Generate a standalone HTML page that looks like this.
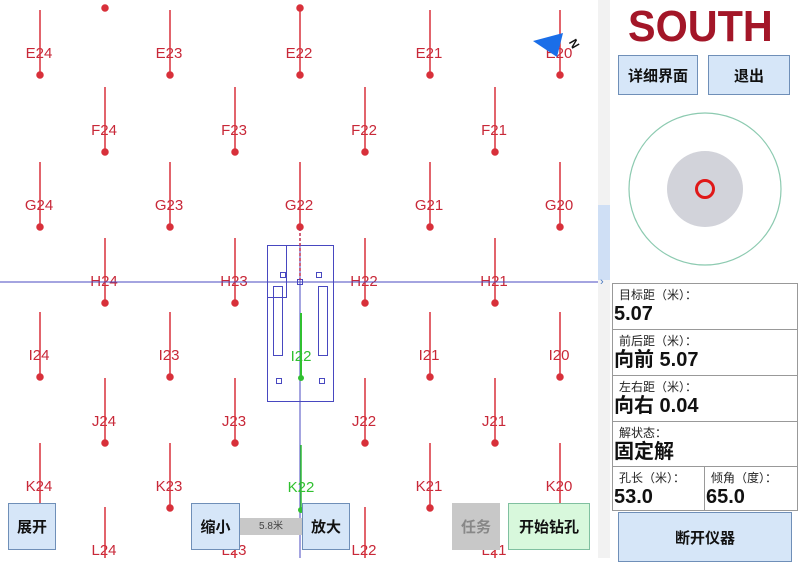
<!DOCTYPE html>
<html><head><meta charset="utf-8"><style>
*{margin:0;padding:0;box-sizing:border-box}
body{width:800px;height:558px;overflow:hidden;background:#fff;font-family:"Liberation Sans","Noto Sans CJK SC",sans-serif;position:relative}
.btn{position:absolute;display:flex;align-items:center;justify-content:center;font-weight:bold;font-size:15px;color:#111;background:#d6e6f8;border:1px solid #6f8fb8}
.cell{position:absolute;border:1px solid #999;background:#fff}
.cell .l{font-size:12px;color:#222;padding-left:6px;line-height:16px;margin-top:3px}
.cell .v{font-size:20px;font-weight:bold;color:#111;line-height:22px;padding-left:1px}
</style></head><body>
<svg width="600" height="558" style="position:absolute;left:0;top:0" font-family="Liberation Sans, sans-serif" font-size="15">
<g id="grid" stroke="#d8303a" stroke-width="1.5" fill="#d8303a"></g>
<line x1="0" y1="282" x2="600" y2="282" stroke="#4848c0" stroke-width="1"/>
<line x1="300" y1="245" x2="300" y2="558" stroke="#4848c0" stroke-width="1"/>
<g fill="none" stroke="#4848c0" stroke-width="1">
<rect x="267.5" y="245.5" width="66" height="156"/>
<rect x="267.5" y="245.5" width="19" height="52"/>
<rect x="273.5" y="286.5" width="9" height="69"/>
<rect x="318.5" y="286.5" width="9" height="69"/>
<rect x="280.5" y="272.5" width="5" height="5"/>
<rect x="316.5" y="272.5" width="5" height="5"/>
<rect x="297.5" y="279.5" width="5" height="5"/>
<rect x="276.5" y="378.5" width="5" height="5"/>
<rect x="319.5" y="378.5" width="5" height="5"/>
</g>
<line x1="300" y1="228" x2="300" y2="280" stroke="#c03050" stroke-width="1.5" stroke-dasharray="3,2"/>
<text x="301" y="361" fill="#30c030" text-anchor="middle">I22</text>
<line x1="301" y1="313" x2="301" y2="378" stroke="#30c030" stroke-width="2"/>
<circle cx="301" cy="378" r="3" fill="#30c030"/>
<text x="301" y="492" fill="#30c030" text-anchor="middle">K22</text>
<line x1="301" y1="445" x2="301" y2="510" stroke="#30c030" stroke-width="1.5"/>
<circle cx="301" cy="510" r="3" fill="#30c030"/>
<polygon points="533,41 563,33 557,57" fill="#1a6ee8"/>
<text x="572" y="44" font-size="12" font-weight="bold" transform="rotate(60 572 40)" fill="#111">N</text>
</svg>
<div style="position:absolute;left:598px;top:0;width:12px;height:558px;background:#f2f2f2"></div>
<div style="position:absolute;left:598px;top:205px;width:12px;height:75px;background:#cfdff5"></div>
<div style="position:absolute;left:600px;top:276px;font-size:11px;color:#4a7ac0">›</div>

<div class="btn" style="left:8px;top:503px;width:48px;height:47px">展开</div>
<div class="btn" style="left:191px;top:503px;width:49px;height:47px">缩小</div>
<div style="position:absolute;left:240px;top:518px;width:62px;height:17px;background:#c8c8c8;font-size:10px;color:#444;text-align:center;line-height:17px">5.8米</div>
<div class="btn" style="left:302px;top:503px;width:48px;height:47px">放大</div>
<div class="btn" style="left:452px;top:503px;width:48px;height:47px;background:#c8c8c8;border-color:#c8c8c8;color:#888">任务</div>
<div class="btn" style="left:508px;top:503px;width:82px;height:47px;background:#d8f8dc;border-color:#80c0a0">开始钻孔</div>

<div style="position:absolute;left:628px;top:5px;font-size:44px;line-height:44px;font-weight:bold;color:#a31628;transform:scaleX(0.94);transform-origin:left top;font-family:'Liberation Sans',sans-serif;white-space:nowrap">SOUTH</div>
<div class="btn" style="left:618px;top:55px;width:80px;height:40px">详细界面</div>
<div class="btn" style="left:708px;top:55px;width:82px;height:40px">退出</div>
<svg width="200" height="180" style="position:absolute;left:610px;top:100px">
<circle cx="95" cy="89" r="76" fill="none" stroke="#8ccab0" stroke-width="1.2"/>
<circle cx="95" cy="89" r="38" fill="#d2d3da"/>
<circle cx="95" cy="89" r="8.5" fill="none" stroke="#e01818" stroke-width="3"/>
</svg>
<div class="cell" style="left:612px;top:283px;width:186px;height:47px"><div class="l">目标距（米）：</div><div class="v">5.07</div></div>
<div class="cell" style="left:612px;top:329px;width:186px;height:47px"><div class="l">前后距（米）：</div><div class="v">向前 5.07</div></div>
<div class="cell" style="left:612px;top:375px;width:186px;height:47px"><div class="l">左右距（米）：</div><div class="v">向右 0.04</div></div>
<div class="cell" style="left:612px;top:421px;width:186px;height:46px"><div class="l">解状态：</div><div class="v">固定解</div></div>
<div class="cell" style="left:612px;top:466px;width:93px;height:45px"><div class="l">孔长（米）：</div><div class="v">53.0</div></div>
<div class="cell" style="left:704px;top:466px;width:94px;height:45px"><div class="l">倾角（度）：</div><div class="v">65.0</div></div>
<div class="btn" style="left:618px;top:512px;width:174px;height:50px">断开仪器</div>
<script>
var g=document.getElementById('grid'),s='';
var rows=[['E',53,0],['F',130,1],['G',205,0],['H',281,1],['I',355,0],['J',421,1],['K',486,0],['L',550,1]];
var ev=[40,170,300,430,560],od=[105,235,365,495];
rows.forEach(function(r){var xs=r[2]?od:ev;xs.forEach(function(x,i){
var n=24-i;var lab=r[0]+n;
if((r[0]=='I'||r[0]=='K')&&x==300)return;
var t=r[1]-43,b=r[1]+22;
s+='<text x="'+(x-1)+'" y="'+(r[1]+5)+'" stroke="none" fill="#c82838" text-anchor="middle">'+lab+'</text>';
s+='<line x1="'+x+'" y1="'+t+'" x2="'+x+'" y2="'+b+'"/><circle cx="'+x+'" cy="'+b+'" r="3"/>';});});
s+='<circle cx="105" cy="8" r="3"/><circle cx="300" cy="8" r="3"/>';
g.innerHTML=s;
</script>
</body></html>
